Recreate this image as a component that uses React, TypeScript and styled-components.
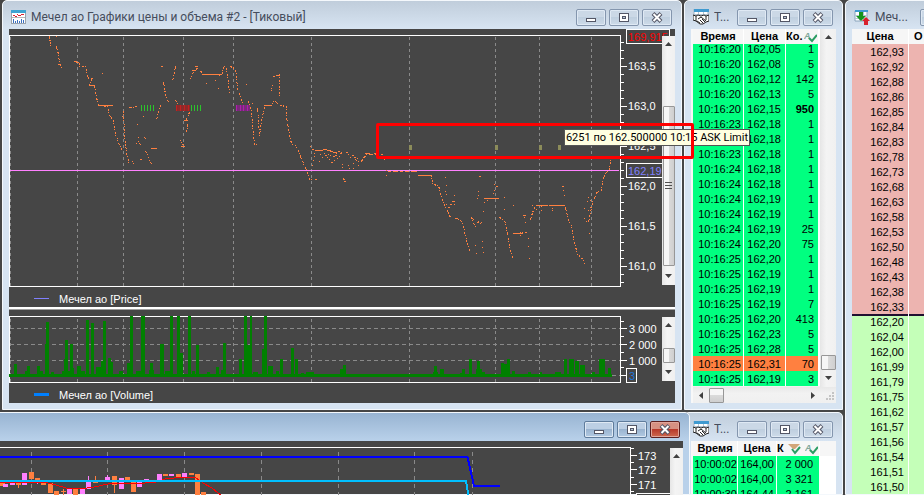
import React from "react";
import styled, { createGlobalStyle, css } from "styled-components";

const GlobalStyle = createGlobalStyle`
  * { box-sizing: border-box; }
  body { margin: 0; background: #464646; }
  button { font: inherit; padding: 0; }
`;

const numeric = css`
  font-family: "Liberation Sans", Arial, sans-serif;
  font-size: 11px;
`;

const ui = css`
  font-family: Roboto, "Open Sans", sans-serif;
`;

/* ---------- desktop and windows ---------- */

const Desktop = styled.main`
  display: grid;
  grid-template-columns: minmax(0, 1fr) 159px 79px;
  grid-template-rows: auto minmax(0, 1fr);
  gap: 2px;
  height: 100vh;
  padding-left: 2px;
  overflow: hidden;
  background: #464646;
`;

const Frame = styled.section<{ $active?: boolean }>`
  position: relative;
  display: flex;
  flex-direction: column;
  min-width: 0;
  min-height: 0;
  padding: 0 6px 6px;
  border: 1px solid #f4f8fc;
  border-radius: 5px 5px 0 0;
  background: ${(p) =>
    p.$active
      ? "linear-gradient(#98b4d2, #b9d1ea 28px) #b9d1ea"
      : "linear-gradient(#c0cddb, #d7e4f2 28px) #d7e4f2"};
`;

const ChartFrame = styled(Frame)`
  z-index: 2;
`;

const ActiveFrame = styled(Frame)`
  z-index: 1;
  margin: 0 -8px 0 -9px;
  padding-bottom: 0;
`;

const TapeFrame = styled(Frame)<{ $open?: boolean }>`
  ${(p) => p.$open && "padding-bottom: 0;"}
`;

const Column = styled.div`
  grid-column: 3;
  grid-row: 1 / 3;
  display: flex;
  overflow: hidden;
`;

const DepthFrame = styled(Frame)`
  flex: 0 0 181px;
  padding-bottom: 0;
`;

const TitleBar = styled.header`
  display: flex;
  flex: none;
  align-items: center;
  gap: 3px;
  height: 28px;
  padding: 4px 3px 0 2px;
`;

const Title = styled.h2`
  ${ui}
  flex: 1;
  min-width: 0;
  margin: 0 0 0 2px;
  overflow: hidden;
  font-size: 12px;
  font-weight: 400;
  line-height: 16px;
  white-space: nowrap;
  color: #464d5c;
`;

const TitleButton = styled.button<{ $danger?: boolean; $active?: boolean }>`
  display: flex;
  flex: none;
  align-items: center;
  justify-content: center;
  width: 30px;
  height: 17px;
  border: 1px solid ${(p) => (p.$danger ? "#5c1f20" : p.$active ? "#5f7c9c" : "#8496ae")};
  border-radius: 2px;
  box-shadow: inset 0 0 0 1px ${(p) => (p.$danger ? "#e0a59a" : "#dfe9f4")};
  background: ${(p) =>
    p.$danger
      ? "linear-gradient(#d69082 45%, #b8392a 50%, #cf6a50)"
      : p.$active
        ? "linear-gradient(#bccfe4 45%, #9ab4d0 50%, #b2cae3)"
        : "linear-gradient(#cbd8e6 45%, #bfcfdf 50%, #cddbe9)"};
`;

function WindowButtons({ active }: { active?: boolean }) {
  return (
    <>
      <TitleButton $active={active} aria-label="Свернуть">
        <svg width="12" height="11" shapeRendering="crispEdges">
          <rect x="1.5" y="6.5" width="9" height="3" fill="#fff" stroke="#535666" />
        </svg>
      </TitleButton>
      <TitleButton $active={active} aria-label="Развернуть">
        <svg width="12" height="11" shapeRendering="crispEdges">
          <rect x="1.5" y="1.5" width="9" height="8" fill="#fff" stroke="#535666" />
          <rect x="4.5" y="4.5" width="3" height="2" fill="#b8c8da" stroke="#535666" />
        </svg>
      </TitleButton>
      <TitleButton $active={active} $danger={active} aria-label="Закрыть">
        <svg width="12" height="11">
          <path d="M2 1.500 L10 9.500 M10 1.500 L2 9.500" stroke="#535666" strokeWidth="4" />
          <path d="M2.500 2 L9.500 9 M9.500 2 L2.500 9" stroke="#fff" strokeWidth="2" />
        </svg>
      </TitleButton>
    </>
  );
}

const Glyph = styled.svg`
  display: block;
  flex: none;
`;

const ChartIcon = () => (
  <Glyph width="15" height="14" shapeRendering="crispEdges">
    <rect width="15" height="14" fill="#9aa3ad" />
    <rect x="1" y="3" width="13" height="10" fill="#fff" />
    <rect width="15" height="3" fill="#3fa4d2" />
    <path d="M2 5.5h2M4 6.500h2M6 4.500h1M7 5.500h3M10 4.500h2M12 4.500h1" stroke="#e02030" />
    <path d="M2.500 13v-4M4.500 13v-2M6.500 13v-3M8.500 13v-2M10.500 13v-4M12.500 13v-3" stroke="#3a6fc0" />
    <path d="M1 7.500h13" stroke="#b8b8b8" />
  </Glyph>
);

const DealsIcon = () => (
  <Glyph width="16" height="16">
    <path d="M1 0h14v11H1z" fill="#fff" stroke="#9fb2c4" />
    <path d="M1 0h15v3H1z" fill="#3f9ad0" />
    <path d="M1 5.500h14M5.500 3v5M10.500 3v5" stroke="#b4c4d2" />
    <path
      d="M0 6l3 1 2-1 3 1 3-1 2 1 3-1v6l-3 1-3 2-3 0-4-3-3-1z"
      fill="#fff"
      stroke="#222"
    />
    <path d="M5 10l3-2 5 4M4 12l3 2M7 11l3 3M9 10l3 3M3 7v5M13 7v4" fill="none" stroke="#222" />
  </Glyph>
);

const DepthIcon = () => (
  <Glyph width="16" height="15">
    <path d="M1 1h12v10H1z" fill="#fff" stroke="#8aa4bc" />
    <path d="M1 0h13v2H1z" fill="#3f9ad0" />
    <path d="M1 5.500h12M1 8.500h12M5.500 2v9M9.500 2v9" stroke="#b4c4d2" />
    <path d="M5 2h4v4h3l-5 5-5-5h3z" fill="#16941c" />
    <path d="M10 15v-4H8l4-4 4 4h-2v4z" fill="#d8222c" />
  </Glyph>
);

/* ---------- scroll bars ---------- */

const ScrollColumn = styled.div<{ $wide?: boolean; $top?: boolean }>`
  display: flex;
  flex: none;
  flex-direction: column;
  align-items: center;
  width: ${(p) => (p.$wide ? 16 : 13)}px;
  margin: ${(p) => (p.$top ? "7px 0 2px" : 0)};
  background: linear-gradient(90deg, #e6e6e6, #f4f4f4 40%, #f0f0f0);
`;

const ScrollRow = styled.div`
  display: flex;
  flex: none;
  align-items: center;
  height: 16px;
  background: linear-gradient(#e8e8e8, #f2f2f2 40%, #f0f0f0);
`;

const Arrow = styled.button`
  display: flex;
  flex: none;
  align-items: center;
  justify-content: center;
  width: 16px;
  height: 17px;
  border: 0;
  background: none;
`;

const Track = styled.div<{ $grow: number }>`
  flex: ${(p) => p.$grow} 1 0;
`;

const Thumb = styled.div<{ $grow?: number; $across?: boolean }>`
  display: flex;
  flex: ${(p) => (p.$grow ? `${p.$grow} 1 0` : "none")};
  align-items: center;
  justify-content: center;
  width: ${(p) => (p.$across ? "15px" : "calc(100% - 1px)")};
  height: 15px;
  border: 1px solid #979797;
  border-radius: 1px;
  background: ${(p) =>
    p.$across
      ? "linear-gradient(#f6f6f6 45%, #dadada 50%, #cfcfcf)"
      : "linear-gradient(90deg, #f6f6f6 45%, #dadada 50%, #cfcfcf)"};
`;

const arrowPaths = {
  up: "M0 5h7L3.500 1z",
  down: "M0 1h7L3.500 5z",
  left: "M5 0v7L1 3.500z",
  right: "M2 0v7L6 3.500z",
};

function ScrollArrow({ to }: { to: keyof typeof arrowPaths }) {
  return (
    <Arrow aria-label={`scroll ${to}`}>
      <svg width="7" height="7">
        <path d={arrowPaths[to]} fill="#404040" />
      </svg>
    </Arrow>
  );
}

/* ---------- charts ---------- */

const ChartBody = styled.div`
  display: flex;
  flex: 1;
  flex-direction: column;
  min-height: 0;
  background: #464646;
`;

const Pane = styled.div<{ $height: number }>`
  display: flex;
  height: ${(p) => p.$height}px;
`;

const Plot = styled.svg`
  display: block;
  flex: 1;
  min-width: 0;
  height: 100%;
`;

const Axis = styled.svg`
  ${numeric}
  display: block;
  flex: none;
  overflow: visible;
  fill: #fff;
`;

const Legend = styled.div`
  ${numeric}
  display: flex;
  align-items: center;
  gap: 10px;
  height: 20px;
  padding: 3px 0 0 25px;
  color: #fff;
`;

const Swatch = styled.span<{ $color: string; $bold?: boolean }>`
  width: 15px;
  height: ${(p) => (p.$bold ? 3 : 1)}px;
  background: ${(p) => p.$color};
`;

const Splitter = styled.div`
  height: 3px;
  border-bottom: 1px solid #a0a0a0;
  background: #fff;
`;

const gridX = [10, 77, 123, 183, 233, 311, 409, 495, 539, 591];

const traces = [
  "49,36 50,47",
  "56,46 58,54 59,63 62,68",
  "74,61 79,62 79,66 85,66 87,77 91,79 89,85 94,86 96,97 98,105",
  "98,105 107,106 109,115 113,120 115,134 120,147 122,150",
  "123,111 124,135 126,152 129,165",
  "129,107 138,106",
  "139,143 142,146",
  "145,151 148,156 151,164",
  "163,82 165,94 168,102 171,105",
  "175,66 172,81",
  "160,105 158,112 156,119",
  "175,100 178,104",
  "189,112 185,121",
  "187,124 186,133",
  "190,79 194,69 198,68 202,73",
  "222,74 223,66 226,67 228,83 229,93",
  "230,66 234,68 236,74 237,90 240,95 242,104",
  "248,101 251,110 253,135 254,144 257,144",
  "257,108 259,135 261,120 264,107",
  "273,76 279,74 279,96",
  "271,104 274,100 280,105 286,106 286,116 289,135 291,143 296,146 300,156 303,163 306,170 309,179 312,179",
  "343,178 346,184",
  "355,159 360,162 366,154 382,154 383,158 386,160",
  "418,175 431,175 432,184 438,185 441,197 447,211 450,217",
  "455,218 460,219 463,226 466,240 470,252",
  "471,217 475,227",
  "499,217 505,222 508,238 510,251 513,259",
  "513,233 527,232",
  "530,220 532,212 535,206",
  "536,205 564,205",
  "565,207 568,220 571,225 574,242 577,254 581,257 585,264",
  "588,222 592,202 597,191 601,190 603,178 606,171 609,170 610,160",
];

const ticks: [number, number, number][] = [
  [56, 36, 1], [50, 40, 1], [58, 64, 3], [76, 62, 3], [102, 73, 1], [202, 74, 20], [100, 105, 13],
  [91, 78, 2], [89, 85, 6], [122, 116, 1], [133, 163, 1], [132, 161, 1], [125, 145, 1], [137, 124, 1],
  [138, 137, 1], [138, 141, 1], [145, 138, 1], [144, 137, 1], [143, 116, 1], [140, 159, 2], [136, 143, 1],
  [151, 148, 6], [161, 66, 2], [184, 120, 4], [180, 140, 1], [181, 142, 1], [182, 144, 2], [181, 146, 4],
  [195, 66, 3], [192, 70, 4], [206, 83, 1], [218, 88, 1], [215, 80, 1], [219, 75, 1], [246, 84, 1],
  [248, 101, 1], [252, 103, 1], [271, 90, 1], [271, 88, 1], [272, 85, 1], [276, 75, 4], [264, 105, 8],
  [315, 179, 2], [310, 146, 1], [312, 149, 2], [315, 150, 8], [323, 149, 4], [327, 150, 4], [330, 151, 3],
  [333, 152, 4], [338, 151, 2], [340, 153, 2], [320, 154, 1], [322, 157, 1], [319, 161, 1], [325, 155, 2],
  [327, 157, 1], [329, 159, 1], [331, 162, 2], [334, 160, 1], [335, 155, 2], [337, 158, 1], [339, 156, 1],
  [328, 154, 1], [330, 155, 1], [333, 156, 2], [336, 153, 1], [324, 153, 1], [313, 160, 1], [312, 165, 1],
  [314, 156, 1], [314, 153, 1], [341, 152, 1], [342, 167, 1], [342, 164, 1], [346, 152, 2], [348, 154, 1],
  [350, 157, 1], [348, 165, 1], [349, 168, 1], [352, 155, 2], [353, 168, 1], [353, 163, 1], [354, 157, 2],
  [357, 158, 1], [358, 165, 1], [361, 160, 2], [363, 157, 1], [365, 153, 5], [370, 154, 3], [374, 153, 5],
  [386, 170, 1], [386, 175, 1], [388, 171, 3], [393, 171, 5], [400, 171, 3], [405, 171, 4], [411, 171, 6],
  [445, 177, 1], [446, 185, 1], [454, 195, 1], [454, 204, 1], [446, 194, 1], [445, 191, 1], [450, 204, 2],
  [452, 201, 3], [446, 204, 1], [448, 207, 2], [479, 176, 2], [478, 191, 1], [478, 195, 1], [477, 198, 1],
  [481, 222, 1], [480, 223, 1], [475, 245, 1], [476, 253, 1], [482, 241, 1], [482, 247, 1], [483, 252, 1],
  [484, 198, 15], [487, 200, 1], [484, 202, 1], [483, 211, 1], [494, 184, 1], [496, 186, 2], [494, 190, 1],
  [493, 193, 1], [504, 197, 1], [504, 209, 1], [513, 205, 1], [473, 219, 1], [471, 218, 2], [523, 215, 3],
  [524, 217, 1], [525, 222, 1], [528, 238, 1], [528, 246, 1], [529, 258, 1], [532, 205, 1], [536, 209, 1],
  [541, 206, 1], [541, 210, 1], [552, 208, 1], [552, 210, 1], [536, 205, 12], [549, 205, 16], [562, 186, 2],
  [563, 190, 1], [564, 195, 1], [584, 218, 1], [584, 208, 1], [586, 221, 1], [587, 201, 1], [588, 197, 1],
  [588, 210, 1], [589, 216, 1], [589, 233, 1], [590, 207, 1], [590, 200, 1], [500, 217, 1], [520, 235, 1],
  [477, 222, 2], [478, 221, 1], [247, 105, 1], [418, 175, 13], [513, 233, 10],
];

const tickPath = ticks.map(([x, y, w]) => `M${x} ${y}h${w}v1h-${w}z`).join("");

function PricePlot() {
  return (
    <Plot viewBox="9 29 612 258" preserveAspectRatio="none" shapeRendering="crispEdges">
      <g stroke="#8a8a8a" strokeDasharray="3 3">
        {gridX.map((x) => (
          <path key={x} d={`M${x}.5 37V286`} />
        ))}
      </g>
      <path d="M9 35.500H620.500V286.500H9.500V35.500" fill="none" stroke="#fff" />
      <g fill="none" stroke="#ff8040" strokeDasharray="2 1 1 2" transform="translate(0.5 0.5)">
        {traces.map((points) => (
          <polyline key={points} points={points} />
        ))}
      </g>
      <path d="M10 170.500H619" stroke="#ff80ff" />
      <path d={tickPath} fill="#ff8040" />
      <path
        d="M141.500 105v6M144.500 105v6M147.500 105v6M150.500 105v6M153.500 105v6M191.500 105v6M194.500 105v6M197.500 105v6M200.500 105v6"
        stroke="#2bc42b"
      />
      <path d="M176 105h14v6h-14z" fill="#8c2a2a" />
      <path d="M176.500 105v6M180.500 105v6M184.500 105v6M188.500 105v6" stroke="#c42020" />
      <path d="M236 105h14v6h-14z" fill="#7a2a7a" />
      <path d="M236.500 105v6M240.500 105v6M243.500 105v6M247.500 105v6" stroke="#b01cb0" />
      <path d="M409 145h3v5h-3zM495 145h3v5h-3zM539 145h3v5h-3zM558 145h3v5h-3z" fill="#8c8c5a" />
    </Plot>
  );
}

const minorPrice = Array.from({ length: 31 }, (_, i) => 42 + i * 8);

function PriceAxis() {
  return (
    <Axis width="41" height="258" viewBox="621 29 41 258">
      <g stroke="#fff" shapeRendering="crispEdges">
        {minorPrice.map((y) => (
          <path key={y} d={`M621 ${y}.5h3`} />
        ))}
        {[66, 106, 146, 186, 226, 266].map((y) => (
          <path key={y} d={`M621 ${y}.5h6`} />
        ))}
      </g>
      {["163,5", "163,0", "162,5", "162,0", "161,5", "161,0"].map((t, i) => (
        <text key={t} x="628" y={70 + i * 40}>
          {t}
        </text>
      ))}
      <g fill="#464646" stroke="#fff" shapeRendering="crispEdges">
        <rect x="626.500" y="29.500" width="43" height="14" />
        <rect x="626.500" y="163.500" width="43" height="14" />
      </g>
      <text x="628" y="41" fill="#f00">
        169,915
      </text>
      <text x="628" y="175" fill="#8080ff">
        162,19
      </text>
    </Axis>
  );
}

const volumes: [number, number, number][] = [
  [14, 3, 364], [25, 5, 371], [27, 3, 366], [37, 3, 366], [40, 3, 371], [45, 4, 344], [46, 3, 322],
  [51, 3, 372], [62, 10, 371], [64, 4, 359], [65, 3, 340], [70, 3, 344], [71, 3, 368], [77, 4, 366],
  [81, 4, 371], [86, 3, 320], [91, 3, 323], [96, 5, 367], [101, 3, 361], [103, 3, 321], [108, 3, 358],
  [111, 2, 362], [119, 4, 371], [127, 4, 363], [130, 3, 316], [136, 6, 371], [141, 4, 316], [149, 5, 370],
  [150, 3, 363], [160, 4, 344], [165, 5, 371], [170, 3, 316], [177, 3, 316], [180, 3, 353], [188, 3, 316],
  [192, 3, 371], [196, 3, 345], [207, 3, 372], [216, 3, 367], [221, 3, 370], [223, 3, 343], [239, 3, 359],
  [244, 3, 316], [247, 3, 345], [250, 2, 316], [253, 5, 372], [262, 5, 349], [264, 3, 316], [268, 5, 366],
  [276, 3, 371], [280, 3, 359], [291, 3, 348], [295, 3, 359], [301, 3, 373], [306, 8, 372], [340, 3, 369],
  [343, 3, 365], [433, 5, 372], [434, 3, 366], [440, 4, 369], [460, 5, 373], [462, 3, 369], [469, 3, 359],
  [476, 6, 369], [477, 3, 361], [482, 3, 372], [501, 3, 363], [504, 5, 364], [507, 3, 359], [512, 3, 371],
  [528, 3, 372], [540, 2, 372], [555, 6, 372], [564, 3, 359], [569, 5, 359], [575, 4, 361], [580, 5, 365],
  [592, 3, 372], [599, 6, 359], [608, 3, 368],
];

function VolumePlot() {
  return (
    <Plot viewBox="9 310 612 73" preserveAspectRatio="none" shapeRendering="crispEdges">
      <g stroke="#8a8a8a">
        {gridX.map((x) => (
          <path key={x} d={`M${x}.5 319V382`} strokeDasharray="3 3" />
        ))}
        {[328, 344, 360, 375].map((y) => (
          <path key={y} d={`M10 ${y}.5H620`} strokeDasharray="4 3" />
        ))}
      </g>
      <path d="M9 316.500H620.500V382.500H9.500V316.500" fill="none" stroke="#fff" />
      <g fill="#008000">
        <rect x="9" y="374" width="603" height="3" />
        {volumes.map(([x, w, top]) => (
          <rect key={x} x={x} y={top} width={w} height={377 - top} />
        ))}
      </g>
    </Plot>
  );
}

function VolumeAxis() {
  return (
    <Axis width="41" height="73" viewBox="621 310 41 73">
      <g stroke="#fff" shapeRendering="crispEdges">
        {[321, 336, 352, 367].map((y) => (
          <path key={y} d={`M621 ${y}.5h3`} />
        ))}
        {[328, 344, 360, 375].map((y) => (
          <path key={y} d={`M621 ${y}.5h6`} />
        ))}
      </g>
      <text x="629" y="333">3 000</text>
      <text x="629" y="349">2 000</text>
      <text x="629" y="365">1 000</text>
      <rect x="626.500" y="368.500" width="10" height="14" fill="#464646" stroke="#fff" shapeRendering="crispEdges" />
      <text x="629" y="380" fill="#1e78dc">3</text>
    </Axis>
  );
}

const up = "#ff80ff";
const down = "#ff8040";
const candles: [number, number, number, string][] = [
  [0, 483, 3, down], [3, 484, 3, up], [10, 482, 3, up], [16, 483, 2, down], [22, 473, 12, up], [29, 472, 7, down],
  [35, 478, 2, down], [41, 481, 4, down], [48, 483, 10, down], [54, 491, 6, down], [61, 491, 1, down],
  [67, 489, 5, up], [73, 489, 7, down], [80, 488, 6, up], [86, 481, 8, up], [93, 482, 1, down],
  [105, 477, 5, up], [112, 476, 9, down], [119, 478, 11, up], [125, 477, 3, down], [131, 481, 11, down],
  [137, 482, 5, up], [144, 479, 2, up], [157, 474, 7, up], [163, 474, 2, down], [169, 474, 2, up],
  [176, 474, 3, down], [182, 473, 4, up], [189, 473, 2, down], [195, 474, 22, down], [201, 492, 4, down],
];

function CandlePlot() {
  return (
    <Plot viewBox="0 441 631 64" preserveAspectRatio="none" shapeRendering="crispEdges">
      <g stroke="#8a8a8a" strokeDasharray="4 4">
        {[31, 107, 184, 261, 338, 414, 472].map((x) => (
          <path key={x} d={`M${x}.5 452V505`} />
        ))}
      </g>
      <path d="M0 447.500H630.500V505" fill="none" stroke="#fff" />
      {candles.map(([x, y, h, color]) => (
        <rect key={x} x={x} y={y} width="5" height={h} fill={color} />
      ))}
      <path d="M63.500 489v6M114.500 484v9M95.500 476v7M18.500 485v3" stroke={down} />
      <path d="M88.500 476v6M107.500 475v3M37.500 480v4" stroke={up} />
      <polyline
        points="0,482 24,482 48,483 56,485 66,488 80,489 94,487 108,484 122,483 134,484 156,482 165,479 184,477 195,477 203,483 212,488 218,493 224,497"
        fill="none"
        stroke="#f00"
      />
      <path d="M0 481H466L470 505" fill="none" stroke="#00bfff" strokeWidth="2" />
      <path d="M0 457H467.500L474 486H500" fill="none" stroke="#0000ff" strokeWidth="2" />
    </Plot>
  );
}

function CandleAxis() {
  return (
    <Axis width="39" height="64" viewBox="631 441 39 64">
      <g stroke="#fff" shapeRendering="crispEdges">
        <path d="M631 448.500h3M631 462.500h3M631 477.500h3M631 491.500h3" />
        <path d="M631 455.500h6M631 469.500h6M631 484.500h6" />
      </g>
      <text x="638" y="460">173</text>
      <text x="638" y="474">172</text>
      <text x="638" y="489">171</text>
      <rect x="636.500" y="493.500" width="40" height="14" fill="#464646" stroke="#fff" shapeRendering="crispEdges" />
    </Axis>
  );
}

/* ---------- highlight over the price chart ---------- */

const Tip = styled.div`
  ${ui}
  position: absolute;
  top: 128px;
  right: -69px;
  height: 17px;
  padding: 0 1px;
  border: 1px solid #555;
  background: #ffffe1;
  font-size: 11px;
  line-height: 15px;
  white-space: nowrap;
  color: #000;
`;

const Highlight = styled.div`
  position: absolute;
  top: 122px;
  right: -13px;
  width: 318px;
  height: 36px;
  border: 3px solid #f00;
  border-radius: 2px;
  pointer-events: none;
`;

/* ---------- tables ---------- */

const TableArea = styled.div`
  display: flex;
  flex: 1;
  min-height: 0;
  background: #f0f0f0;
`;

const Table = styled.table<{ $columns: string; $scrolled?: boolean }>`
  ${numeric}
  display: flex;
  flex: 1;
  flex-direction: column;
  min-width: 0;
  height: ${(p) => (p.$scrolled ? "357px" : "auto")};
  padding-right: ${(p) => (p.$scrolled ? 2 : 0)}px;
  overflow: hidden;
  line-height: 15px;
  color: #000;
  background: #fff;

  thead, tbody { display: block; }
  tbody {
    ${(p) => p.$scrolled && "display: flex; flex: 1; flex-direction: column; justify-content: flex-end; min-height: 0; overflow: hidden;"}
  }
  tr {
    display: grid;
    flex: none;
    grid-template-columns: ${(p) => p.$columns};
    column-gap: 1px;
    height: 15px;
  }
`;

const Th = styled.th<{ $start?: boolean }>`
  padding: 0 2px 0 ${(p) => (p.$start ? 5 : 2)}px;
  font-size: 11px;
  font-weight: 700;
  text-align: ${(p) => (p.$start ? "left" : "center")};
  white-space: nowrap;
  background: #f6f6f6;
`;

const IconTh = styled(Th)`
  display: flex;
  align-items: center;
  justify-content: space-between;
  padding: 0 1px 0 0;
`;

const Td = styled.td<{ $tone: string; $bold?: boolean; $inset?: number }>`
  padding: 0 ${(p) => p.$inset ?? 4}px 0 0;
  font-weight: ${(p) => (p.$bold ? 700 : 400)};
  line-height: 16px;
  text-align: right;
  white-space: nowrap;
  background: ${(p) => p.$tone};
`;

const TapeBody = styled.div`
  display: flex;
  flex: 1;
  flex-direction: column;
  min-height: 0;
  padding-left: 2px;
  background: #f8f8f8;
`;

const SizeGrip = styled.svg`
  display: block;
  width: 16px;
  height: 16px;
`;

const CheckIcon = () => (
  <svg width="13" height="12">
    <text x="0" y="8" fontFamily="Liberation Sans" fontStyle="italic" fontWeight="700" fontSize="9" fill="#7fa79a">
      A
    </text>
    <path d="M5 7l3 3 5-6" fill="none" stroke="#2a9d63" strokeWidth="2" />
  </svg>
);

const FilterIcon = () => (
  <svg width="13" height="12">
    <path d="M0 1h12L7 6H5z" fill="#d2a679" />
    <path d="M4 6l3 4 5-6" fill="none" stroke="#2a9d63" strokeWidth="2" />
  </svg>
);

const green = "#00ff80";
const orange = "#ff8040";

const deals: [string, string, string][] = [
  ["10:16:20", "162,05", "1"], ["10:16:20", "162,08", "5"], ["10:16:20", "162,12", "142"],
  ["10:16:20", "162,13", "5"], ["10:16:20", "162,15", "950"], ["10:16:23", "162,18", "1"],
  ["10:16:23", "162,18", "1"], ["10:16:23", "162,18", "1"], ["10:16:24", "162,18", "1"],
  ["10:16:24", "162,18", "1"], ["10:16:24", "162,19", "1"], ["10:16:24", "162,19", "1"],
  ["10:16:24", "162,19", "25"], ["10:16:24", "162,20", "75"], ["10:16:25", "162,20", "1"],
  ["10:16:25", "162,19", "1"], ["10:16:25", "162,19", "1"], ["10:16:25", "162,19", "7"],
  ["10:16:25", "162,20", "413"], ["10:16:25", "162,23", "5"], ["10:16:25", "162,28", "5"],
  ["10:16:25", "162,31", "70"], ["10:16:25", "162,19", "3"],
];

const openingDeals: [string, string, string][] = [
  ["10:00:02", "164,00", "2 000"], ["10:00:02", "164,00", "3 321"], ["10:00:30", "164,44", "2 161"],
];

const asks = [
  "162,93", "162,92", "162,88", "162,86", "162,85", "162,84", "162,83", "162,78", "162,73",
  "162,68", "162,63", "162,58", "162,53", "162,50", "162,48", "162,43", "162,38", "162,33",
];

const bids = [
  "162,20", "162,04", "162,00", "161,99", "161,79", "161,75", "161,62", "161,57", "161,56",
  "161,54", "161,51", "161,50",
];

const DepthTable = styled(Table)`
  .spread td { border-top: 2px solid #201030; line-height: 13px; }
`;

export default function App() {
  return (
    <>
      <GlobalStyle />
      <Desktop>
        <ChartFrame>
          <TitleBar>
            <ChartIcon />
            <Title>Мечел ао Графики цены и объема #2 - [Тиковый]</Title>
            <WindowButtons />
          </TitleBar>
          <ChartBody>
            <Pane $height={258}>
              <PricePlot />
              <PriceAxis />
              <ScrollColumn $top>
                <ScrollArrow to="up" />
                <Track $grow={53} />
                <Thumb $grow={160}>
                  <svg width="7" height="9" shapeRendering="crispEdges">
                    <path d="M0 1.500h7M0 4.500h7M0 7.500h7" stroke="#505050" />
                  </svg>
                </Thumb>
                <Track $grow={2} />
                <ScrollArrow to="down" />
              </ScrollColumn>
            </Pane>
            <Legend>
              <Swatch $color="#8080ff" />
              Мечел ао [Price]
            </Legend>
            <Splitter />
            <Pane $height={73}>
              <VolumePlot />
              <VolumeAxis />
              <ScrollColumn $top>
                <ScrollArrow to="up" />
                <Track $grow={14} />
                <Thumb />
                <Track $grow={1} />
                <ScrollArrow to="down" />
              </ScrollColumn>
            </Pane>
            <Legend>
              <Swatch $color="#0080ff" $bold />
              Мечел ао [Volume]
            </Legend>
          </ChartBody>
          <Tip role="tooltip">6251 по 162.500000 10:15 ASK Limit</Tip>
          <Highlight />
        </ChartFrame>

        <TapeFrame>
          <TitleBar>
            <DealsIcon />
            <Title>Т...</Title>
            <WindowButtons />
          </TitleBar>
          <TapeBody>
            <TableArea>
              <Table $columns="50px 41px minmax(0, 1fr)" $scrolled>
                <thead>
                  <tr>
                    <Th>Время</Th>
                    <Th>Цена</Th>
                    <IconTh>
                      Ко.
                      <CheckIcon />
                    </IconTh>
                  </tr>
                </thead>
                <tbody>
                  {deals.map(([time, price, count], i) => {
                    const tone = count === "70" ? orange : green;
                    return (
                      <tr key={i}>
                        <Td $tone={tone} $inset={2}>{time}</Td>
                        <Td $tone={tone}>{price}</Td>
                        <Td $tone={tone} $bold={count === "950"}>{count}</Td>
                      </tr>
                    );
                  })}
                </tbody>
              </Table>
              <ScrollColumn $wide>
                <ScrollArrow to="up" />
                <Track $grow={1} />
                <Thumb />
                <ScrollArrow to="down" />
              </ScrollColumn>
            </TableArea>
            <ScrollRow>
              <ScrollArrow to="left" />
              <Thumb $across />
              <Track $grow={1} />
              <ScrollArrow to="right" />
              <SizeGrip shapeRendering="crispEdges">
                <path
                  d="M12 5h2v2h-2zM9 8h2v2H9zM12 8h2v2h-2zM6 11h2v2H6zM9 11h2v2H9zM12 11h2v2h-2z"
                  fill="#c4c4c4"
                />
              </SizeGrip>
            </ScrollRow>
          </TapeBody>
        </TapeFrame>

        <ActiveFrame $active>
          <TitleBar>
            <Title />
            <WindowButtons active />
          </TitleBar>
          <ChartBody>
            <Pane $height={64}>
              <CandlePlot />
              <CandleAxis />
              <ScrollColumn $top>
                <ScrollArrow to="up" />
              </ScrollColumn>
            </Pane>
          </ChartBody>
        </ActiveFrame>

        <TapeFrame $open>
          <TitleBar>
            <DealsIcon />
            <Title>Т...</Title>
            <WindowButtons />
          </TitleBar>
          <TapeBody>
            <Table $columns="44px 38px 42px minmax(0, 1fr)">
              <thead>
                <tr>
                  <Th>Время</Th>
                  <Th>Цена</Th>
                  <IconTh>
                    К
                    <FilterIcon />
                    <CheckIcon />
                  </IconTh>
                  <Th />
                </tr>
              </thead>
              <tbody>
                {openingDeals.map(([time, price, count], i) => (
                  <tr key={i}>
                    <Td $tone={green} $inset={0}>{time}</Td>
                    <Td $tone={green} $inset={2}>{price}</Td>
                    <Td $tone={green} $inset={6}>{count}</Td>
                    <Td $tone="#fff" />
                  </tr>
                ))}
              </tbody>
            </Table>
          </TapeBody>
        </TapeFrame>

        <Column>
          <DepthFrame>
            <TitleBar>
              <DepthIcon />
              <Title>Меч...</Title>
              <WindowButtons />
            </TitleBar>
            <DepthTable $columns="56px minmax(0, 1fr)">
              <thead>
                <tr>
                  <Th>Цена</Th>
                  <Th $start>О</Th>
                </tr>
              </thead>
              <tbody>
                {asks.map((price) => (
                  <tr key={price}>
                    <Td $tone="#edb4b0">{price}</Td>
                    <Td $tone="#edb4b0" />
                  </tr>
                ))}
                {bids.map((price, i) => (
                  <tr key={price} className={i === 0 ? "spread" : undefined}>
                    <Td $tone="#c4ffb8">{price}</Td>
                    <Td $tone="#c4ffb8" />
                  </tr>
                ))}
              </tbody>
            </DepthTable>
          </DepthFrame>
        </Column>
      </Desktop>
    </>
  );
}
